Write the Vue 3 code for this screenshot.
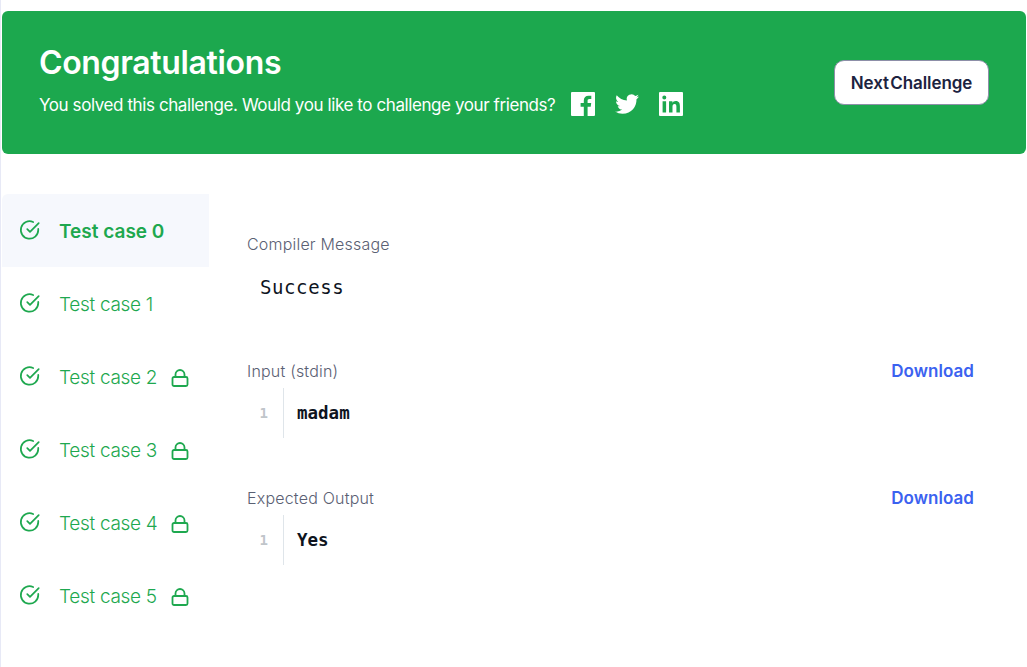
<template>
  <div class="page">
    <header class="banner">
      <div class="banner-text">
        <h1>Congratulations</h1>
        <div class="share">
          <span>You solved this challenge. Would you like to challenge your friends?</span>
          <svg class="social" viewBox="0 0 24 24" width="24" height="24">
            <path fill="#fff" d="M1 0h22a1 1 0 0 1 1 1v22a1 1 0 0 1-1 1h-6.4v-9.3h3.1l.5-3.6h-3.6V8.8c0-1 .3-1.8 1.8-1.8h1.9V3.8c-.3 0-1.5-.1-2.8-.1-2.800 0-4.700 1.700-4.700 4.800v2.600H9.600v3.600h3.200V24H1a1 1 0 0 1-1-1V1a1 1 0 0 1 1-1z" />
          </svg>
          <svg class="social" viewBox="0 0 24 24" width="24" height="24">
            <path fill="#fff" d="M24 4.600c-.9.400-1.800.7-2.800.800 1-.6 1.800-1.600 2.200-2.700-1 .6-2 1-3.100 1.200A4.900 4.900 0 0 0 11.900 8.400C7.800 8.200 4.200 6.200 1.700 3.200c-1.300 2.200-.7 5.100 1.500 6.600-.8 0-1.600-.2-2.200-.6 0 2.300 1.600 4.400 3.900 4.900-.7.200-1.500.2-2.200.1.600 2 2.400 3.400 4.600 3.400A9.900 9.900 0 0 1 0 19.600a14 14 0 0 0 7.500 2.200c9.100 0 14.300-7.700 14-14.600 1-.7 1.800-1.600 2.500-2.600z" />
          </svg>
          <svg class="social" viewBox="0 0 24 24" width="24" height="24">
            <path fill="#fff" fill-rule="evenodd" d="M1 0h22a1 1 0 0 1 1 1v22a1 1 0 0 1-1 1H1a1 1 0 0 1-1-1V1a1 1 0 0 1 1-1zm2.600 9.200v11.200h3.500V9.200H3.600zm1.700-5.600a2 2 0 1 0 0 4 2 2 0 0 0 0-4zm4.700 5.600v11.200h3.500v-5.600c0-1.500.3-2.900 2.100-2.900s1.800 1.700 1.800 3v5.500h3.500v-6.100c0-3-.7-5.400-4.200-5.400-1.700 0-2.800.9-3.300 1.800V9.200H10z" />
          </svg>
        </div>
      </div>
      <button class="next">Next Challenge</button>
    </header>

    <div class="results">
      <aside class="cases">
        <div
          v-for="(item, i) in cases"
          :key="item.name"
          class="case"
          :class="{ active: i === 0 }"
        >
          <svg class="check" viewBox="0 0 24 24" width="22" height="22" fill="none" stroke="#1ea84f" stroke-width="1.900" stroke-linecap="round" stroke-linejoin="round">
            <path d="M21 10.800V12a9.500 9.500 0 1 1-5.600-8.700" />
            <path d="M21.500 4.500 12 14l-3-3" />
          </svg>
          <span class="case-name">{{ item.name }}</span>
          <svg v-if="item.locked" class="lock" viewBox="0 0 18 18" width="18" height="18" fill="none" stroke="#1ea84f" stroke-width="1.800" stroke-linejoin="round">
            <rect x="1.500" y="8" width="15" height="9" rx="1.500" />
            <path d="M4.500 8V5.500a4.500 4.500 0 0 1 9 0V8" />
          </svg>
        </div>
      </aside>

      <main class="detail">
        <section class="compiler">
          <div class="label">Compiler Message</div>
          <pre class="message">Success</pre>
        </section>
        <section v-for="block in blocks" :key="block.label" class="block">
          <div class="block-head">
            <span class="label">{{ block.label }}</span>
            <a class="download">Download</a>
          </div>
          <div class="code">
            <span class="line-no">1</span>
            <span class="code-text">{{ block.value }}</span>
          </div>
        </section>
      </main>
    </div>
  </div>
</template>

<script setup>
const cases = [
  { name: "Test case 0", locked: false },
  { name: "Test case 1", locked: false },
  { name: "Test case 2", locked: true },
  { name: "Test case 3", locked: true },
  { name: "Test case 4", locked: true },
  { name: "Test case 5", locked: true },
];

const blocks = [
  { label: "Input (stdin)", value: "madam" },
  { label: "Expected Output", value: "Yes" },
];
</script>

<style>
html,
body {
  background: #fff;
  overflow: hidden;
}
</style>

<style scoped>
.page {
  height: 667px;
  box-sizing: border-box;
  padding: 11px 1px 0 1px;
  font-family: Inter, "Liberation Sans", sans-serif;
  border-left: 1px solid #e7e9f6;
}

.banner {
  height: 143px;
  box-sizing: border-box;
  background: #1ca84e;
  border-radius: 6px;
  padding: 0 37px 0 37px;
  display: flex;
  align-items: center;
  justify-content: space-between;
  color: #fff;
}

.banner-text {
  padding-bottom: 7px;
}

h1 {
  margin: 0 0 11px;
  font-size: 32px;
  line-height: 40px;
  font-weight: 600;
  letter-spacing: -0.35px;
}

.share {
  display: flex;
  align-items: center;
  font-size: 17px;
  letter-spacing: -0.41px;
}

.social {
  margin-left: 20px;
  margin-top: -2px;
  flex: none;
}

.share span + .social {
  margin-left: 16px;
}

.next {
  width: 155px;
  height: 45px;
  padding: 0;
  background: #fff;
  border: 1px solid #8d8fa8;
  border-radius: 10px;
  color: #1c2340;
  font-family: inherit;
  font-size: 17px;
  font-weight: 600;
  letter-spacing: -0.07px;
  word-spacing: -3px;
}

.results {
  display: flex;
  margin-top: 40px;
}

.cases {
  width: 207px;
  flex: none;
}

.case {
  height: 73px;
  display: flex;
  align-items: center;
  padding-left: 17px;
  color: #1ea84f;
  font-size: 19px;
  font-weight: 300;
  letter-spacing: -0.3px;
  border-radius: 6px 0 0 0;
}

.case.active {
  background: #f6f8fd;
  font-weight: 600;
  letter-spacing: 0;
}

.check {
  flex: none;
  margin-top: -2px;
}

.case-name {
  margin-left: 18px;
  padding-top: 2px;
}

.lock {
  margin-left: 14px;
  margin-top: 2px;
}

.detail {
  flex: 1;
  padding: 39px 52px 0 38px;
}

.label {
  font-size: 16px;
  line-height: 22px;
  font-weight: 300;
  color: #5a6073;
  letter-spacing: 0.2px;
}

.message {
  margin: 20px 0 0 13px;
  font-family: "DejaVu Sans Mono", monospace;
  font-size: 19px;
  line-height: 24px;
  letter-spacing: 0.6px;
  color: #0e141e;
}

.block {
  margin-top: 61px;
}

.block + .block {
  margin-top: 49px;
}

.block-head {
  display: flex;
  align-items: center;
  justify-content: space-between;
}

.download {
  font-size: 17px;
  font-weight: 600;
  letter-spacing: 0.05px;
  color: #3b62f0;
}

.code {
  display: flex;
  align-items: center;
  height: 50px;
  margin-top: 6px;
}

.line-no {
  width: 37px;
  height: 100%;
  box-sizing: border-box;
  padding-right: 15px;
  border-right: 1px solid #dfe5ea;
  display: flex;
  align-items: center;
  justify-content: flex-end;
  font-family: "DejaVu Sans Mono", monospace;
  font-size: 14px;
  font-weight: 700;
  color: #c0c5ca;
}

.code-text {
  margin-left: 13px;
  font-family: "DejaVu Sans Mono", monospace;
  font-size: 17.5px;
  font-weight: 700;
  color: #0e141e;
}
</style>
